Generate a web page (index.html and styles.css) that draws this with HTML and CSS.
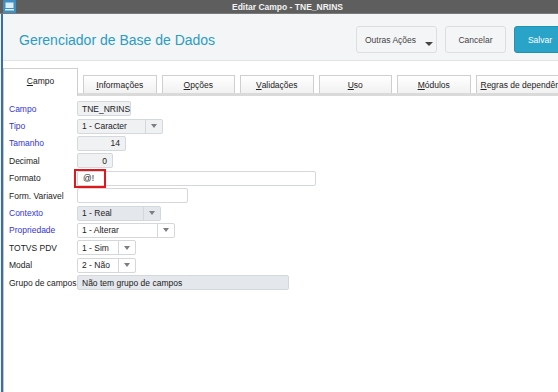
FILE: index.html
```html
<!DOCTYPE html>
<html lang="pt-BR">
<head>
    <meta charset="UTF-8">
    <title>Editar Campo - TNE_NRINS</title>
    <link rel="stylesheet" href="styles.css">
</head>
<body>
    <div class="titlebar">
        <span class="app-icon">
            <svg width="13" height="13" viewBox="0 0 13 13">
                <rect x="0" y="0" width="13" height="13" rx="1" fill="#3f8fc0"/>
                <rect x="2.5" y="2.5" width="8" height="5.5" fill="#d9eef8"/>
                <rect x="2" y="9" width="9" height="1.5" fill="#d9eef8"/>
            </svg>
        </span>
        <span class="window-title">Editar Campo - TNE_NRINS</span>
    </div>

    <div class="window">
        <div class="header">
            <h1>Gerenciador de Base de Dados</h1>
            <div class="actions">
                <button class="btn btn-more">Outras Ações<span class="caret"></span></button>
                <button class="btn">Cancelar</button>
                <button class="btn btn-primary">Salvar</button>
            </div>
        </div>

        <div class="tabs">
            <div class="tab active"><u>C</u>ampo</div>
            <div class="tab"><u>I</u>nformações</div>
            <div class="tab"><u>O</u>pções</div>
            <div class="tab"><u>V</u>alidações</div>
            <div class="tab"><u>U</u>so</div>
            <div class="tab"><u>M</u>ódulos</div>
            <div class="tab tab-cut"><u>R</u>egras de dependência</div>
        </div>

        <div class="panel">
            <div class="form">
                <label class="req">Campo</label>
                <div class="field"><div class="box readonly w-campo">TNE_NRINS</div></div>

                <label class="req">Tipo</label>
                <div class="field"><div class="box select readonly w-tipo"><span>1 - Caracter</span><i class="arrow"></i></div></div>

                <label class="req">Tamanho</label>
                <div class="field"><div class="box readonly num w-tam">14</div></div>

                <label>Decimal</label>
                <div class="field"><div class="box readonly num w-dec">0</div></div>

                <label>Formato</label>
                <div class="field">
                    <div class="box w-formato">@!</div>
                    <div class="highlight"></div>
                </div>

                <label>Form. Variavel</label>
                <div class="field"><div class="box w-formvar"></div></div>

                <label class="req">Contexto</label>
                <div class="field"><div class="box select disabled w-contexto"><span>1 - Real</span><i class="arrow"></i></div></div>

                <label class="req">Propriedade</label>
                <div class="field"><div class="box select w-prop"><span>1 - Alterar</span><i class="arrow"></i></div></div>

                <label>TOTVS PDV</label>
                <div class="field"><div class="box select w-small"><span>1 - Sim</span><i class="arrow"></i></div></div>

                <label>Modal</label>
                <div class="field"><div class="box select w-small"><span>2 - Não</span><i class="arrow"></i></div></div>

                <label>Grupo de campos</label>
                <div class="field"><div class="box disabled w-grupo">Não tem grupo de campos</div></div>
            </div>
        </div>
    </div>
</body>
</html>
```

FILE: styles.css
```css
* {
    box-sizing: border-box;
    margin: 0;
    padding: 0;
}

body {
    font-family: "Liberation Sans", Arial, sans-serif;
    font-size: 8.5px;
    color: #222;
    background-color: #eef0f2;
    width: 558px;
    height: 392px;
    overflow: hidden;
}

/* Window title bar */
.titlebar {
    height: 14px;
    background-color: #5e5e5e;
    border-bottom: 1px solid #7a7a7a;
    display: flex;
    align-items: center;
}

.app-icon {
    margin-left: 3px;
    display: flex;
    align-self: flex-start;
}

.window-title {
    margin-left: 216px;
    color: #f2f2f2;
    font-weight: bold;
    font-size: 8.5px;
}

.window {
    margin-left: 1px;
    border-left: 2px solid #3d6ea3;
    height: 378px;
    background-color: #fff;
}

/* Header with actions */
.header {
    height: 47px;
    background-color: #f3f5f6;
    border-bottom: 1px solid #e0e3e5;
    display: flex;
    align-items: flex-start;
    padding-left: 16px;
}

.header h1 {
    font-size: 14px;
    font-weight: normal;
    color: #2b9cc5;
    margin-top: 18px;
}

.actions {
    margin-left: auto;
    margin-right: -8px;
    margin-top: 12px;
    display: flex;
    gap: 8px;
}

.btn {
    font-family: inherit;
    font-size: 8.5px;
    color: #444;
    height: 27px;
    border: 1px solid #dcdfe2;
    border-radius: 3px;
    background-color: #f4f5f6;
    width: 61px;
    flex-shrink: 0;
}

.btn-more {
    width: 81px;
    position: relative;
    padding-right: 12px;
}

.caret {
    position: absolute;
    right: 3px;
    bottom: 6px;
    border-left: 4px solid transparent;
    border-right: 4px solid transparent;
    border-top: 4px solid #444;
}

.btn-primary {
    width: 52px;
    background-color: #2aa3c9;
    border-color: #2192b6;
    color: #fff;
}

/* Tabs */
.tabs {
    display: flex;
    align-items: flex-end;
    gap: 5px;
    margin-top: 4px;
    height: 31px;
    border-bottom: 3px solid #dadada;
}

.tab {
    width: 73.5px;
    height: 18px;
    flex-shrink: 0;
    border: 1px solid #cfcfcf;
    border-bottom: none;
    background: linear-gradient(#ffffff, #f1f1f1);
    display: flex;
    align-items: center;
    justify-content: center;
    color: #222;
    white-space: nowrap;
}

.tab.active {
    width: 75px;
    height: 28px;
    margin-bottom: -3px;
    background: #fff;
    align-items: flex-start;
    padding-top: 7px;
    position: relative;
    border-left-color: #c8c8c8;
}

.tab-cut {
    width: 90px;
    justify-content: flex-start;
    padding-left: 4px;
    overflow: hidden;
}

/* Form panel */
.panel {
    border-left: 1px solid #c8c8c8;
    border-bottom: 1px solid #cdcdcd;
    height: 297px;
    padding: 4px 0 0 5px;
}

.form {
    display: grid;
    grid-template-columns: 68px auto;
    grid-auto-rows: 17.4px;
    align-items: center;
}

.form label {
    white-space: nowrap;
    color: #222;
}

.form label.req {
    color: #3535d0;
}

.field {
    position: relative;
    display: flex;
    align-items: center;
    height: 100%;
}

.box {
    height: 15px;
    border: 1px solid #d3d8dc;
    border-radius: 2px;
    background-color: #fff;
    padding: 0 4px;
    display: flex;
    align-items: center;
    white-space: nowrap;
    color: #222;
}

.box.readonly {
    background-color: #eff1f3;
}

.box.disabled {
    background-color: #e4e7eb;
}

.box.num {
    justify-content: flex-end;
    padding-right: 5px;
}

.box.select {
    padding-right: 0;
}

.box.select span {
    flex-grow: 1;
}

.arrow {
    width: 17px;
    height: 100%;
    border-left: 1px solid #d3d8dc;
    display: flex;
    align-items: center;
    justify-content: center;
}

.arrow::after {
    content: "";
    border-left: 3px solid transparent;
    border-right: 3px solid transparent;
    border-top: 4px solid #7a7f85;
}

.w-campo { width: 54px; }
.w-tipo { width: 86px; }
.w-tam { width: 49px; }
.w-dec { width: 36px; }
.w-formato { width: 239px; padding-left: 5px; }
.w-formvar { width: 111px; }
.w-contexto { width: 84px; }
.w-prop { width: 98px; }
.w-small { width: 59px; }
.w-grupo { width: 212px; }

/* Red highlight over the Formato value */
.highlight {
    position: absolute;
    left: -3px;
    top: -1px;
    width: 32px;
    height: 19px;
    border: 2px solid #e2171c;
}
```
